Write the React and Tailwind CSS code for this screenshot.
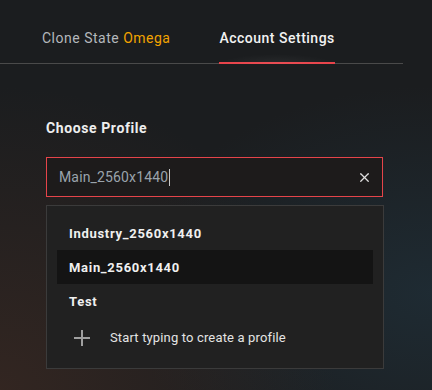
import { X } from 'lucide-react';

const PROFILES = ['Industry_2560x1440', 'Main_2560x1440', 'Test'];

function Tabs() {
  return (
    <div className="w-[403px] h-[64px] flex items-end gap-[49px] pl-[42px] border-b border-[#4a4a4a]">
      <div className="h-[63px] flex items-center pt-[14px] text-[14px] tracking-[0.5px] text-[#b4b8bc]">
        Clone State&nbsp;<span className="text-[#f2a300]">Omega</span>
      </div>
      <div className="relative h-[64px] -mb-px flex items-center pt-[14px] text-[14px] font-medium tracking-[0.5px] text-[#f2f2f2] border-b-2 border-[#e8434a]">
        Account Settings
        <div className="absolute left-0 right-0 -bottom-[2px] h-[10px] bg-[radial-gradient(ellipse_at_bottom,rgba(255,255,255,0.06),transparent_70%)]" />
      </div>
    </div>
  );
}

function ProfileInput() {
  return (
    <div className="w-[337px] h-[40px] flex items-center border border-[#e5444a] bg-[#1d1b1b] pl-[12px] pr-[10px]">
      <span className="text-[14px] tracking-[0.15px] text-[#9aa3ab]">Main_2560x1440</span>
      <span className="w-px h-[17px] bg-[#c8c8c8] ml-px" />
      <X className="ml-auto text-[#e0e0e0]" size={15} strokeWidth={2} />
    </div>
  );
}

function Dropdown() {
  return (
    <div className="w-[338px] mt-[8px] border border-[#3b3b3b] bg-[#212121] p-[10px]">
      {PROFILES.map((name) => (
        <div
          key={name}
          className={`h-[34px] flex items-center px-[12px] pt-px text-[13px] font-bold tracking-[0.7px] text-[#f0f0f0] ${name === 'Main_2560x1440' ? 'bg-[#141414]' : ''}`}
        >
          {name}
        </div>
      ))}
      <div className="h-[40px] flex items-center pl-[17px]">
        <svg width="16" height="16" viewBox="0 0 16 16" className="text-[#a0a0a0]">
          <path d="M8 0v16M0 8h16" stroke="currentColor" strokeWidth="2" />
        </svg>
        <span className="ml-[20px] text-[13px] tracking-[0.15px] text-[#e4e4e4]">Start typing to create a profile</span>
      </div>
    </div>
  );
}

export default function App() {
  return (
    <div
      className="w-[432px] h-[390px] overflow-hidden bg-[#1b1d1f] bg-[radial-gradient(ellipse_at_0%_100%,rgba(70,45,35,0.55),transparent_55%),radial-gradient(ellipse_at_100%_75%,rgba(35,60,75,0.45),transparent_50%)]"
      style={{ fontFamily: 'Roboto, "Liberation Sans", sans-serif' }}
    >
      <Tabs />
      <div className="pl-[46px] pt-[54px]">
        <div className="text-[14px] font-bold tracking-[0.6px] text-[#eeeeee] leading-[20px]">Choose Profile</div>
        <div className="mt-[19px]">
          <ProfileInput />
          <Dropdown />
        </div>
      </div>
    </div>
  );
}
